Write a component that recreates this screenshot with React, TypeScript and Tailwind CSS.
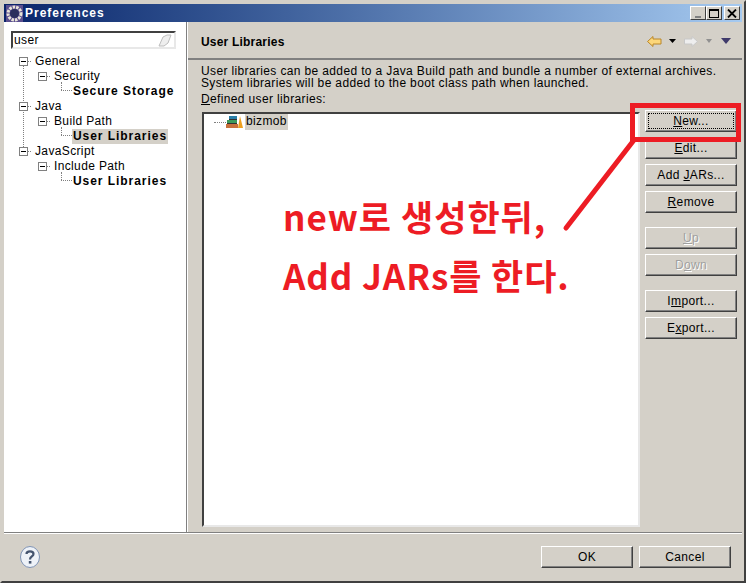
import { ReactNode } from "react";

const Minus = () => (
  <span className="relative w-[9px] h-[9px] border border-[#808080] bg-white shrink-0 z-10">
    <span className="absolute left-[1px] top-[3px] w-[5px] h-[1px] bg-black" />
  </span>
);

type NodeProps = { indent: string; label: string; bold?: boolean; leaf?: boolean; selected?: boolean };

const TreeNode = ({ indent, label, bold, leaf, selected }: NodeProps) => (
  <div className={`h-[15px] flex items-center ${indent}`}>
    {leaf ? (
      <span className="relative w-[11px] h-[15px] shrink-0">
        <span className="absolute left-0 top-[-2px] h-[8px] border-l border-dotted border-[#808080]" />
        <span className="absolute left-0 top-[6px] w-[11px] border-t border-dotted border-[#808080]" />
      </span>
    ) : (
      <>
        <Minus />
        <span className="w-[3px] border-t border-dotted border-[#808080] mr-[3px]" />
      </>
    )}
    <span
      className={`h-[15px] leading-[15px] px-[1px] ${bold ? "font-bold tracking-[0.95px]" : ""} ${selected ? "bg-[#d4d0c8]" : ""}`}
    >
      {label}
    </span>
  </div>
);

const Btn = ({ children, disabled, className = "" }: { children: ReactNode; disabled?: boolean; className?: string }) => (
  <div
    className={`w-[92px] h-[22px] shrink-0 flex items-center justify-center bg-[#d4d0c8] border border-t-white border-l-white border-r-[#404040] border-b-[#404040] shadow-[inset_-1px_-1px_0_#808080] ${disabled ? "text-[#a0a0a0] [text-shadow:1px_1px_0_#fff]" : "text-black"} ${className}`}
  >
    {children}
  </div>
);

const BooksIcon = () => (
  <svg width="17" height="14" viewBox="0 0 17 14" className="shrink-0">
    <rect x="3" y="1" width="8" height="3" fill="#2a7fa8" />
    <rect x="1" y="5" width="10" height="3" fill="#3c9a5a" />
    <rect x="0" y="9" width="12" height="4" fill="#c8703a" />
    <path d="M3 4.5h8M1 8.5h10" stroke="#333" />
    <path d="M12 13 L14 1 L17 13 Z" fill="#eea020" />
  </svg>
);

const HelpIcon = () => (
  <svg width="20" height="22" viewBox="0 0 20 22">
    <ellipse cx="10" cy="11" rx="9.5" ry="10.5" fill="#eef2f8" stroke="#7f93b5" />
    <path d="M6.5 8 C6.5 4.5 13.5 4.5 13.5 8 C13.5 10.5 10 10.5 10 13.5" fill="none" stroke="#44546f" strokeWidth="2.2" />
    <rect x="8.8" y="15" width="2.6" height="2.6" fill="#44546f" />
  </svg>
);

const GearIcon = () => (
  <svg width="17" height="17" viewBox="0 0 17 17">
    <rect width="17" height="17" fill="#5b4f8f" />
    <circle cx="8.5" cy="8.5" r="6.5" fill="none" stroke="#e8e4d8" strokeWidth="3" strokeDasharray="2.5 1" />
    <circle cx="8.5" cy="8.5" r="4.5" fill="#2b2f5c" />
  </svg>
);

const WinBtn = ({ children, className = "" }: { children: ReactNode; className?: string }) => (
  <div className={`w-[16px] h-[14px] bg-[#d4d0c8] border border-t-white border-l-white border-r-[#404040] border-b-[#404040] flex items-center justify-center ${className}`}>
    {children}
  </div>
);

export default function App() {
  return (
    <div className="relative w-[746px] h-[583px] overflow-hidden bg-[#d4d0c8] text-black text-[12px] leading-[13px] tracking-[0.36px] font-['Liberation_Sans','Noto_Sans_CJK_KR',sans-serif] border-2 border-t-[#d4d0c8] border-l-[#d4d0c8] border-r-[#404040] border-b-[#404040] p-[2px] flex flex-col">
      {/* title bar */}
      <div className="h-[18px] shrink-0 flex items-center pl-[2px] pr-[2px] bg-gradient-to-r from-[#0a246a] to-[#a6caf0]">
        <GearIcon />
        <span className="ml-[2px] text-white font-bold text-[12px] tracking-[1px]">Preferences</span>
        <div className="ml-auto flex">
          <WinBtn>
            <span className="w-[6px] h-[2px] bg-[#808080] mt-[7px]" />
          </WinBtn>
          <WinBtn>
            <span className="w-[10px] h-[9px] border border-t-2 border-black" />
          </WinBtn>
          <WinBtn className="ml-[2px]">
            <svg width="10" height="9" viewBox="0 0 10 9">
              <path d="M1 0.5l8 8M9 0.5l-8 8" stroke="#000" strokeWidth="1.8" />
            </svg>
          </WinBtn>
        </div>
      </div>

      <div className="flex-1 min-h-0 flex border-b border-b-[#808080]">
        {/* left panel */}
        <div className="w-[183px] shrink-0 bg-white border-r border-r-[#808080] pl-[7px] pt-[9px]">
          <div className="w-[165px] h-[18px] flex items-center justify-between border-2 border-t-[#404040] border-l-[#404040] border-r-[#e8e8e8] border-b-[#e8e8e8] pl-[1px] pr-[2px]">
            <span>user</span>
            <svg width="14" height="13" viewBox="0 0 14 13">
              <path d="M1 12L5 3 9 1 13 1 10 9 6 12Z" fill="#eee" stroke="#bdbdbd" />
            </svg>
          </div>
          <div className="relative mt-[5px]">
            <span className="absolute left-[12px] top-[9px] h-[88px] border-l border-dotted border-[#808080]" />
            <TreeNode indent="ml-[8px]" label="General" />
            <TreeNode indent="ml-[27px]" label="Security" />
            <TreeNode indent="ml-[50px]" label="Secure Storage" bold leaf />
            <TreeNode indent="ml-[8px]" label="Java" />
            <TreeNode indent="ml-[27px]" label="Build Path" />
            <TreeNode indent="ml-[50px]" label="User Libraries" bold leaf selected />
            <TreeNode indent="ml-[8px]" label="JavaScript" />
            <TreeNode indent="ml-[27px]" label="Include Path" />
            <TreeNode indent="ml-[50px]" label="User Libraries" bold leaf />
          </div>
        </div>

        {/* right panel */}
        <div className="flex-1 min-w-0 flex flex-col border-l border-l-white">
          <div className="h-[38px] shrink-0 flex items-center pl-[13px] pr-[11px] pt-[2px] border-b-2 border-b-[#808080]">
            <span className="font-bold tracking-[0.2px] mt-[2px]">User Libraries</span>
            <div className="ml-auto flex items-center">
              <svg width="15" height="11" viewBox="0 0 15 11">
                <path d="M0.5 5.5L6 0.5V3H14V8H6V10.5Z" fill="#fdd77a" stroke="#b8862a" />
              </svg>
              <svg width="7" height="4" viewBox="0 0 7 4" className="ml-[7px]"><path d="M0 0H7L3.5 4Z" fill="#000" /></svg>
              <svg width="14" height="11" viewBox="0 0 14 11" className="ml-[8px]">
                <path d="M13.5 5.5L8 0.5V3H0.5V8H8V10.5Z" fill="#eee" stroke="#c8c8c8" />
              </svg>
              <svg width="6" height="4" viewBox="0 0 6 4" className="ml-[8px]"><path d="M0 0H6L3 4Z" fill="#909090" /></svg>
              <svg width="10" height="6" viewBox="0 0 10 6" className="ml-[9px]"><path d="M0 0H10L5 6Z" fill="#3f3a6b" /></svg>
            </div>
          </div>
          <div className="flex-1 min-h-0 flex pl-[13px] pt-[5px]">
            <div className="w-[439px] shrink-0 flex flex-col">
              <p className="leading-[12px] whitespace-nowrap">
                User libraries can be added to a Java Build path and bundle a number of external archives.
                <br />
                System libraries will be added to the boot class path when launched.
              </p>
              <div className="mt-[2px] h-[16px] leading-[16px]">
                <u>D</u>efined user libraries:
              </div>
              <div className="mt-[5px] ml-[1px] w-[438px] h-[415px] bg-white border-2 border-t-[#404040] border-l-[#404040] border-r-[#e8e8e8] border-b-[#e8e8e8] pl-[10px]">
                <div className="flex items-center h-[16px]">
                  <span className="w-[12px] border-t border-dotted border-[#808080]" />
                  <BooksIcon />
                  <span className="ml-[2px] px-[1px] h-[16px] leading-[14px] bg-[#d4d0c8]">bizmob</span>
                </div>
              </div>
            </div>
            <div className="ml-[5px] pt-[45px] flex flex-col">
              <Btn className="border-black"><span className="w-[86px] h-[16px] flex items-center justify-center border border-dotted border-black"><span><u>N</u>ew...</span></span></Btn>
              <Btn className="mt-[5px]"><span><u>E</u>dit...</span></Btn>
              <Btn className="mt-[5px]"><span>Add <u>J</u>ARs...</span></Btn>
              <Btn className="mt-[5px]"><span><u>R</u>emove</span></Btn>
              <Btn disabled className="mt-[14px]"><span><u>U</u>p</span></Btn>
              <Btn disabled className="mt-[5px]"><span>D<u>o</u>wn</span></Btn>
              <Btn className="mt-[14px]"><span>I<u>m</u>port...</span></Btn>
              <Btn className="mt-[5px]"><span>E<u>x</u>port...</span></Btn>
            </div>
          </div>
        </div>
      </div>

      {/* footer */}
      <div className="h-[46px] shrink-0 border-t border-t-white flex items-center pl-[16px] pr-[11px] pt-[1px]">
        <HelpIcon />
        <Btn className="ml-auto"><span>OK</span></Btn>
        <Btn className="ml-[6px]"><span>Cancel</span></Btn>
      </div>

      {/* red annotation drawn over the dialog */}
      <div className="absolute left-[628px] top-[101px] w-[111px] h-[39px] border-[5px] border-[#ed1c24]" />
      <svg className="absolute left-[558px] top-[134px]" width="80" height="98" viewBox="0 0 80 98">
        <path d="M6 92L74 4" stroke="#ed1c24" strokeWidth="5" strokeLinecap="round" />
      </svg>
      <div className="absolute left-[281px] top-[194px] text-[#ed1c24] font-bold text-[35px] tracking-[1px] leading-[40px] font-['Noto_Sans_CJK_KR',sans-serif] whitespace-nowrap">
        new로 생성한뒤,
      </div>
      <div className="absolute left-[281px] top-[253px] text-[#ed1c24] font-bold text-[35px] tracking-[0.9px] leading-[40px] font-['Noto_Sans_CJK_KR',sans-serif] whitespace-nowrap">
        Add JARs를 한다.
      </div>
    </div>
  );
}
